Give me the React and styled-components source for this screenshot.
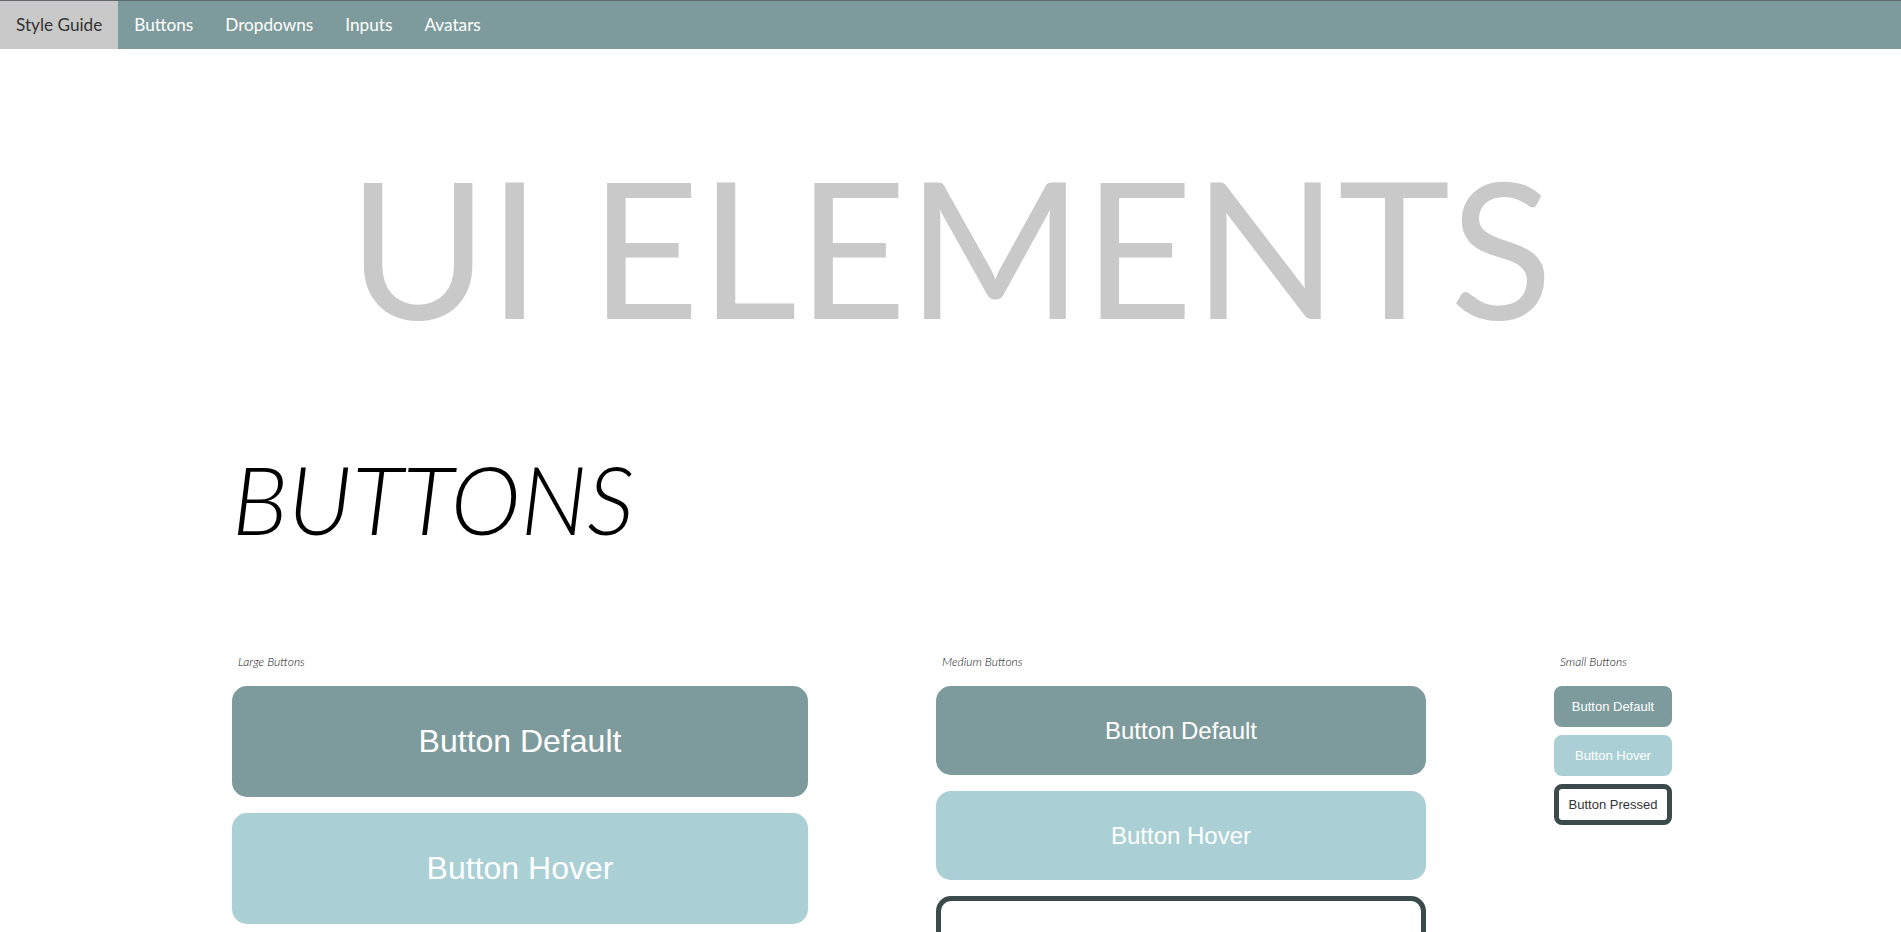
import React from 'react';
import styled, { createGlobalStyle } from 'styled-components';

const GlobalStyle = createGlobalStyle`
  body {
    margin: 0;
    font-family: Lato, 'Open Sans', sans-serif;
    background: #fff;
  }
`;

const Nav = styled.nav`
  display: flex;
  height: 48px;
  border-top: 1px solid #5f6b6c;
  background-color: #7d9b9d;
`;

const NavItem = styled.a`
  display: block;
  padding: 0 16px;
  line-height: 48px;
  font-size: 17.2px;
  color: ${(props) => (props.active ? '#333' : '#fff')};
  background-color: ${(props) => (props.active ? '#c9c9c9' : 'transparent')};
  text-decoration: none;
`;

const Hero = styled.h1`
  margin: 76px 0 0;
  text-align: center;
  font-size: 190px;
  font-weight: 400;
  line-height: 240px;
  color: #c9c9c9;
`;

const Section = styled.section`
  padding: 0 0 0 232px;
`;

const SectionTitle = styled.h2`
  margin: 77px 0 0;
  font-size: 95px;
  font-weight: 300;
  font-style: italic;
  line-height: 113px;
  color: #000;
`;

const Row = styled.div`
  display: flex;
  align-items: flex-start;
  gap: 128px;
  margin-top: 100px;
`;

const Column = styled.div`
  display: flex;
  flex-direction: column;
  width: ${(props) => props.width}px;
`;

const Label = styled.span`
  padding-left: 6px;
  margin-bottom: 17px;
  font-size: 12px;
  font-style: italic;
  font-weight: 300;
  line-height: 14px;
  color: #111;
`;

const ButtonStack = styled.div`
  display: flex;
  flex-direction: column;
  gap: ${(props) => props.gap}px;
`;

const sizes = {
  large: { height: 111, font: 32, radius: 15 },
  medium: { height: 89, font: 24, radius: 15 },
  small: { height: 41, font: 13, radius: 8 },
};

const colors = {
  default: { bg: '#7d9b9d', fg: '#fff', border: '#7d9b9d' },
  hover: { bg: '#aad0d5', fg: '#fff', border: '#aad0d5' },
  pressed: { bg: '#fff', fg: '#333', border: '#3b4a4b' },
};

const Button = styled.button`
  box-sizing: border-box;
  width: 100%;
  height: ${(props) => sizes[props.size].height}px;
  border: 5px solid ${(props) => colors[props.variant].border};
  border-radius: ${(props) => sizes[props.size].radius}px;
  background-color: ${(props) => colors[props.variant].bg};
  color: ${(props) => colors[props.variant].fg};
  font-family: 'Liberation Sans', Arial, sans-serif;
  font-size: ${(props) => sizes[props.size].font}px;
  padding: 0;
  cursor: pointer;
`;

const groups = [
  { size: 'large', title: 'Large Buttons', width: 576, gap: 16 },
  { size: 'medium', title: 'Medium Buttons', width: 490, gap: 16 },
  { size: 'small', title: 'Small Buttons', width: 118, gap: 8 },
];

const App = () => {
  return (
    <>
      <GlobalStyle />
      <Nav>
        <NavItem active>Style Guide</NavItem>
        <NavItem>Buttons</NavItem>
        <NavItem>Dropdowns</NavItem>
        <NavItem>Inputs</NavItem>
        <NavItem>Avatars</NavItem>
      </Nav>
      <Hero>UI ELEMENTS</Hero>
      <Section>
        <SectionTitle>BUTTONS</SectionTitle>
        <Row>
          {groups.map((g) => (
            <Column key={g.size} width={g.width}>
              <Label>{g.title}</Label>
              <ButtonStack gap={g.gap}>
                <Button size={g.size} variant="default">Button Default</Button>
                <Button size={g.size} variant="hover">Button Hover</Button>
                <Button size={g.size} variant="pressed">Button Pressed</Button>
              </ButtonStack>
            </Column>
          ))}
        </Row>
      </Section>
    </>
  );
};

export default App;
